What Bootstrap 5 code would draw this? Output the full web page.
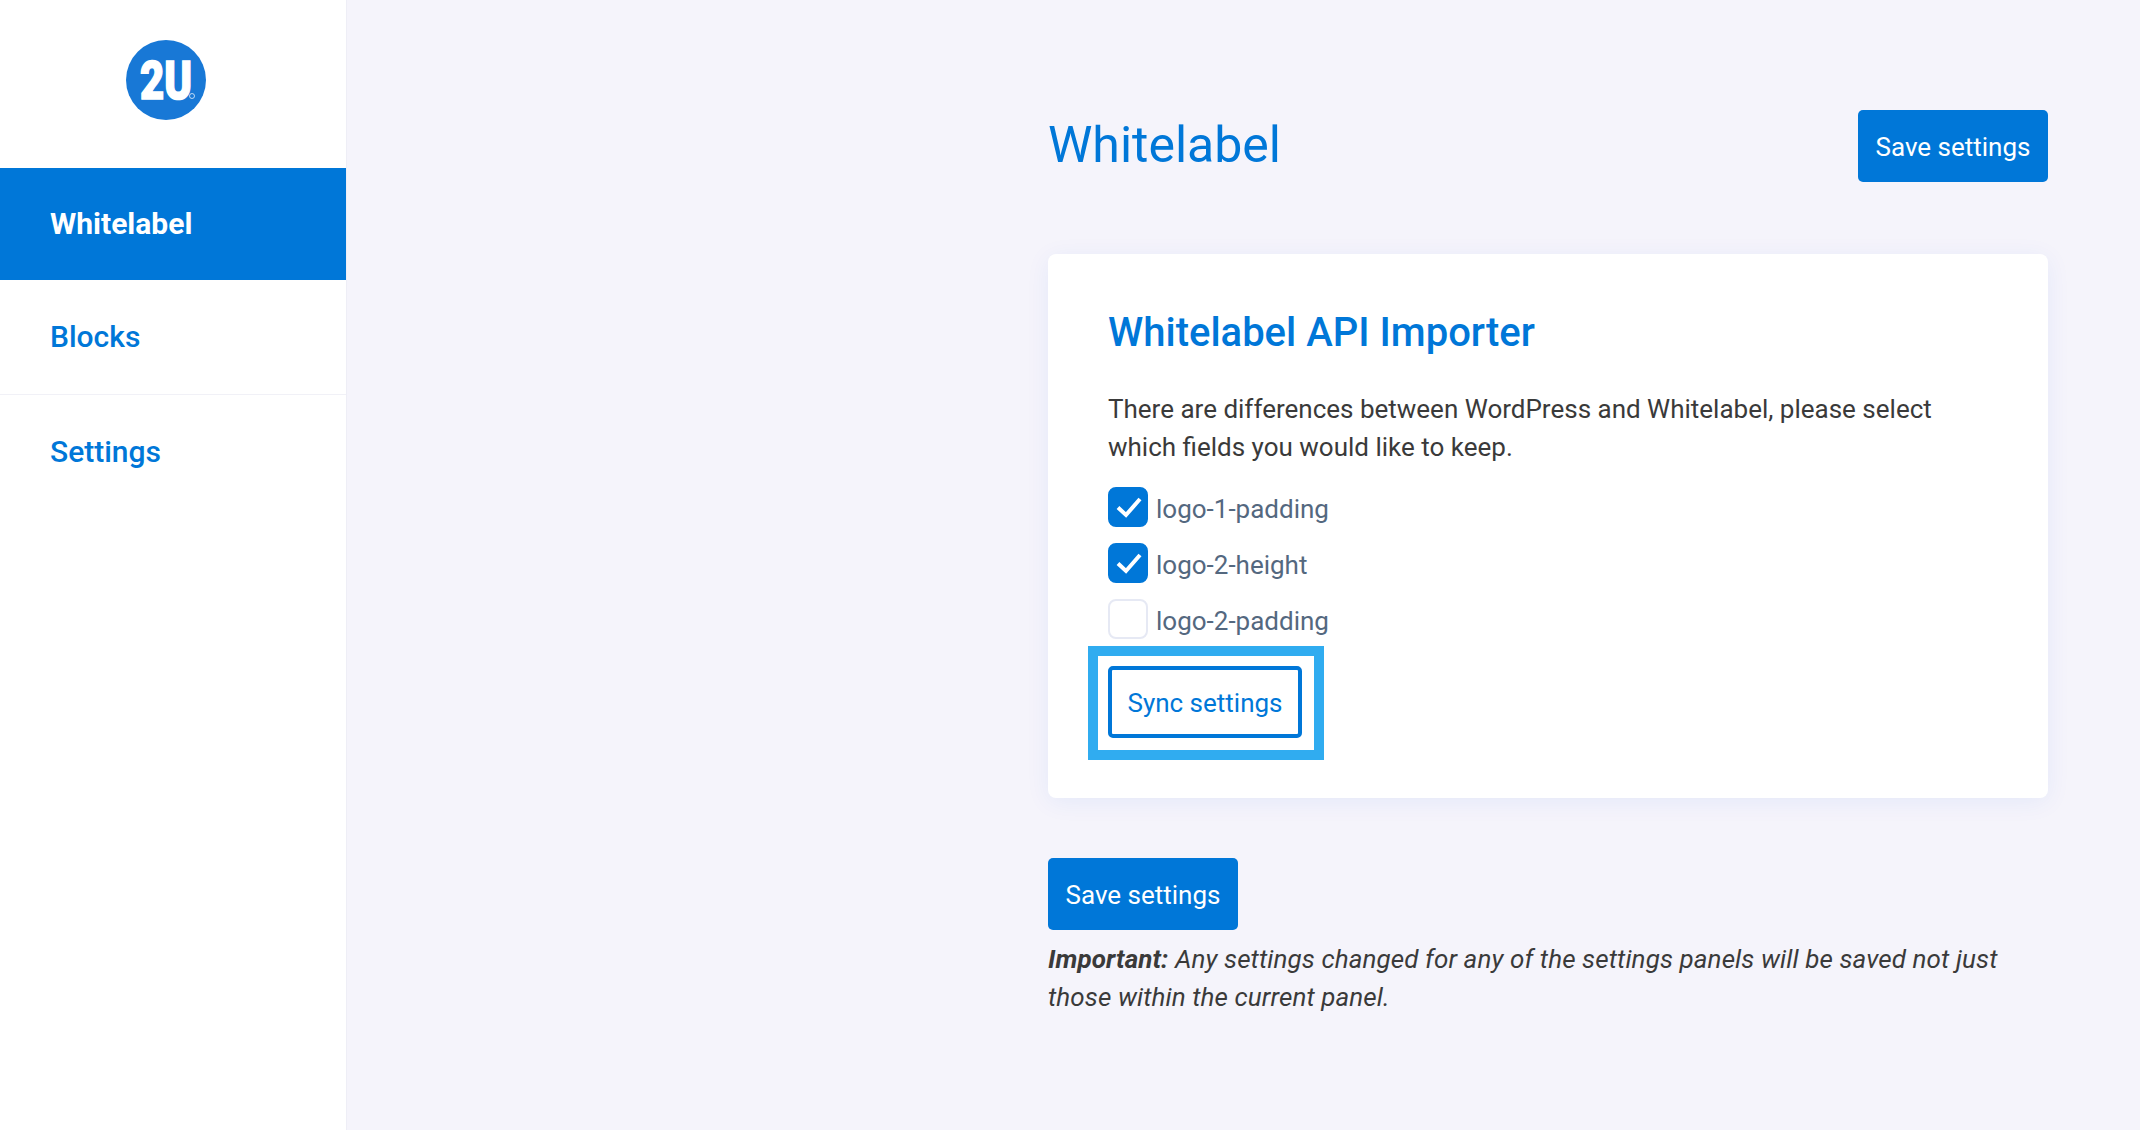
<!DOCTYPE html>
<html lang="en">
<head>
    <meta charset="UTF-8">
    <meta name="viewport" content="width=device-width, initial-scale=1.0">
    <title>Whitelabel</title>
    <link href="https://cdn.jsdelivr.net/npm/bootstrap@5.3.0/dist/css/bootstrap.min.css" rel="stylesheet">
    <style>
        body { background: #f5f4fb; font-family: Roboto, "Liberation Sans", sans-serif; font-size: 26px; line-height: 38px; color: #3a3a3a; }
        .side-bar { width: 347px; min-height: 1130px; background: #fff; border-right: 1px solid #eeeef6; }
        .logo-box { height: 168px; padding-right: 14px; }
        .side-link { height: 115px; padding-left: 50px; font-size: 30px; font-weight: 500; color: #0077d8; text-decoration: none; border-bottom: 1px solid #f1f1f7; }
        .side-link:last-child { height: 113px; border-bottom: 0; }
        .side-link.current { height: 112px; background: #0077d8; color: #fff; font-weight: 700; border-bottom: 0; }
        .main-col { width: 1000px; margin-left: 701px; padding-top: 110px; }
        .page-title { font-size: 50px; font-weight: 400; line-height: 70px; color: #0077d8; margin: 0 0 2px; }
        .blue-btn { width: 190px; height: 72px; padding: 2px 0 0; background: #0077d8; border: 0; border-radius: 5px; color: #fff; font-size: 26px; }
        .blue-btn:hover { background: #0077d8; color: #fff; }
        .panel-box { margin-top: 72px; height: 544px; padding: 55px 60px 0; background: #fff; border: 0; border-radius: 8px; box-shadow: 0 4px 24px rgba(0, 90, 220, .07); }
        .panel-title { font-size: 40px; font-weight: 500; line-height: 48px; color: #0077d8; margin: 0 0 33px; }
        .panel-text { margin: 0 0 21px; }
        .check-row { margin: 0 0 16px; padding: 0; min-height: 40px; display: flex; align-items: center; }
        .check-row .form-check-input { width: 40px; height: 40px; margin: 0 8px 0 0; float: none; border: 2px solid #e6e9f4; border-radius: 8px; }
        .check-row .form-check-input:checked[type=checkbox] { background-color: #0077d8; border-color: #0077d8; background-size: 40px 40px; background-image: url("data:image/svg+xml,%3csvg xmlns='http://www.w3.org/2000/svg' viewBox='0 0 40 40'%3e%3cpath fill='none' stroke='%23fff' stroke-width='4' d='M10 20.5l8 7.5 14-16'/%3e%3c/svg%3e"); }
        .check-row .form-check-label { color: #54687f; position: relative; top: 2px; }
        .sync-mark { display: inline-block; margin: -9px 0 0 -20px; padding: 10px 12px 12px 10px; border: 10px solid #30acf0; }
        .sync-btn { display: block; width: 194px; height: 72px; padding: 2px 0 0; background: #fff; border: 4px solid #0077d8; border-radius: 5px; color: #0077d8; font-size: 26px; }
        .lower-btn { margin-top: 60px; display: block; }
        .note-text { margin: 10px 0 0; font-style: italic; letter-spacing: .1px; }
    </style>
</head>
<body>
    <div class="d-flex">
        <!-- Sidebar -->
        <nav class="side-bar flex-shrink-0">
            <div class="logo-box d-flex align-items-center justify-content-center pb-2">
                <svg width="80" height="80" viewBox="0 0 80 80" role="img" aria-label="2U">
                    <circle cx="40" cy="40" r="40" fill="#1878d6"/>
                    <text x="14" y="59" font-family="Roboto, sans-serif" font-size="54" font-weight="900" textLength="52" lengthAdjust="spacingAndGlyphs" stroke="#fff" stroke-width="1.6" fill="#fff">2U</text>
                    <circle cx="66" cy="56" r="2.5" fill="none" stroke="#fff" stroke-width=".7"/>
                </svg>
            </div>
            <div class="d-flex flex-column">
                <a class="side-link current d-flex align-items-center" href="#">Whitelabel</a>
                <a class="side-link d-flex align-items-center" href="#">Blocks</a>
                <a class="side-link d-flex align-items-center" href="#">Settings</a>
            </div>
        </nav>

        <!-- Main column -->
        <main class="main-col">
            <div class="d-flex justify-content-between align-items-start">
                <h1 class="page-title">Whitelabel</h1>
                <button class="btn blue-btn" type="button">Save settings</button>
            </div>

            <div class="card panel-box">
                <h2 class="panel-title">Whitelabel API Importer</h2>
                <p class="panel-text">There are differences between WordPress and Whitelabel, please select which fields you would like to keep.</p>
                <div class="form-check check-row">
                    <input class="form-check-input" type="checkbox" id="logo1" checked>
                    <label class="form-check-label" for="logo1">logo-1-padding</label>
                </div>
                <div class="form-check check-row">
                    <input class="form-check-input" type="checkbox" id="logo2" checked>
                    <label class="form-check-label" for="logo2">logo-2-height</label>
                </div>
                <div class="form-check check-row">
                    <input class="form-check-input" type="checkbox" id="logo3">
                    <label class="form-check-label" for="logo3">logo-2-padding</label>
                </div>
                <div><div class="sync-mark"><button class="btn sync-btn" type="button">Sync settings</button></div></div>
            </div>

            <button class="btn blue-btn lower-btn" type="button">Save settings</button>
            <p class="note-text"><strong>Important:</strong> Any settings changed for any of the settings panels will be saved not just those within the current panel.</p>
        </main>
    </div>
    <script src="https://cdn.jsdelivr.net/npm/bootstrap@5.3.0/dist/js/bootstrap.bundle.min.js"></script>
</body>
</html>
